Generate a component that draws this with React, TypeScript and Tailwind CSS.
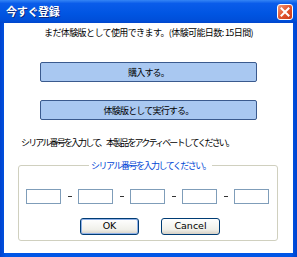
import React from "react";

const jp = { fontFamily: '"Noto Sans CJK JP", "Noto Sans", sans-serif' };
const lat = { fontFamily: '"DejaVu Sans", "Liberation Sans", sans-serif' };

function Dash() {
  return <div className="w-[17px] flex justify-center items-center"><div className="w-[4px] h-[1px] bg-[#333]" /></div>;
}

function Box() {
  return <div className="w-[35px] h-[15px] border border-[#7f9db9] bg-white" />;
}

export default function App() {
  return (
    <div className="w-[297px] h-[257px] flex flex-col bg-[linear-gradient(to_right,#0043cf,#0056e6_2%,#0056e6_98%,#0043cf)] overflow-hidden">
      <div className="h-[23px] flex items-center justify-between pl-[6px] pr-[4px] bg-[linear-gradient(to_bottom,#3585f5,#0a5cea_15%,#0055e2_60%,#004ed8_90%,#0046cc)]">
        <span className="text-white text-[11px] font-bold tracking-[-0.3px] [text-shadow:1px_1px_0_#0a2a80]" style={jp}>今すぐ登録</span>
        <div className="w-[16px] h-[16px] rounded-[3px] border border-white bg-[linear-gradient(135deg,#f39a7a,#e2542c_50%,#c8391a)] flex items-center justify-center">
          <svg width="10" height="10" viewBox="0 0 10 10">
            <path d="M1.5 1.5 L8.5 8.5 M8.5 1.5 L1.5 8.5" stroke="white" strokeWidth="2" strokeLinecap="square" />
          </svg>
        </div>
      </div>
      <div className="flex-1 mx-[4px] mb-[4px] bg-white flex flex-col text-[#000]" style={jp}>
        <div className="h-[16px] mt-[1px] flex items-center justify-center text-[9px] tracking-[-0.6px] leading-none">
          まだ体験版として使用できます。(体験可能日数: 15日間)
        </div>
        <div className="ml-[36px] mt-[22px] w-[217px] h-[20px] rounded-[2px] border border-[#3a5a8e] bg-[#a9c8f1] flex items-center justify-center text-[9px] tracking-[-0.8px] leading-none">
          購入する。
        </div>
        <div className="ml-[36px] mt-[18px] w-[217px] h-[20px] rounded-[2px] border border-[#3a5a8e] bg-[#a9c8f1] flex items-center justify-center text-[9px] tracking-[-0.8px] leading-none">
          体験版として実行する。
        </div>
        <div className="ml-[17px] mt-[16px] h-[12px] flex items-center text-[9px] tracking-[-1.85px] leading-none">
          シリアル番号を入力して、本製品をアクティベートしてください。
        </div>
        <div className="relative ml-[14px] mt-[17px] w-[260px] h-[76px] border border-[#d0d0bf] rounded-[3px] flex flex-col items-center">
          <div className="absolute -top-[6px] left-[70px] bg-white px-[2px] text-[9px] tracking-[-1.5px] leading-none text-[#0046d5] h-[11px] flex items-center">
            シリアル番号を入力してください。
          </div>
          <div className="mt-[23px] ml-[-1px] flex">
            <Box /><Dash /><Box /><Dash /><Box /><Dash /><Box /><Dash /><Box />
          </div>
          <div className="mt-[14px] flex gap-[22px] pl-[4px]" style={lat}>
            <div className="w-[59px] h-[17px] rounded-[3px] border border-[#003c74] bg-[linear-gradient(to_bottom,#ffffff,#f0f0ea_70%,#d6d0c5)] flex items-center justify-center text-[9.5px] shadow-[inset_0_0_0_1px_#8fb1e8]">
              OK
            </div>
            <div className="w-[59px] h-[17px] rounded-[3px] border border-[#003c74] bg-[linear-gradient(to_bottom,#ffffff,#f0f0ea_70%,#d6d0c5)] flex items-center justify-center text-[9.5px]">
              Cancel
            </div>
          </div>
        </div>
      </div>
    </div>
  );
}
